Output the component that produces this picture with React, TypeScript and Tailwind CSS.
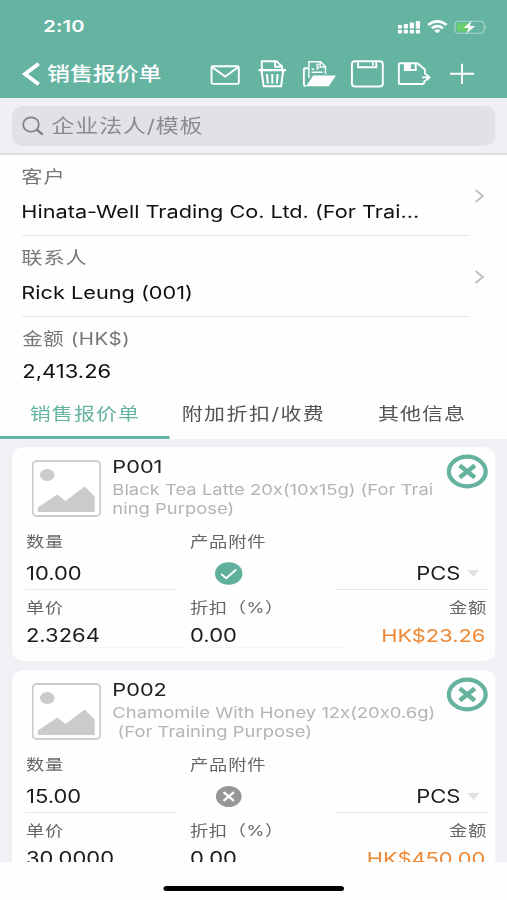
import React from "react";

const items = [
  {
    code: "P001",
    desc: ["Black Tea Latte 20x(10x15g) (For Trai", "ning Purpose)"],
    qty: "10.00",
    attached: true,
    price: "2.3264",
    discount: "0.00",
    amount: "HK$23.26",
  },
  {
    code: "P002",
    desc: ["Chamomile With Honey 12x(20x0.6g)", " (For Training Purpose)"],
    qty: "15.00",
    attached: false,
    price: "30.0000",
    discount: "0.00",
    amount: "HK$450.00",
  },
];

function StatusBar() {
  return (
    <div className="flex h-[50px] items-center justify-between pt-[3px] pl-[35.5px] pr-[16px]">
      <span className="text-[16.5px] font-semibold leading-none tracking-[0.1px]">2:10</span>
      <svg className="h-[16px] w-[74px]" viewBox="0 0 90 16" preserveAspectRatio="none">
        {/* signal */}
        <g fill="#fff">
          <rect x="0" y="6" width="4.2" height="3.6" rx="1" />
          <rect x="6" y="5" width="4.2" height="4.6" rx="1" />
          <rect x="12" y="3.5" width="4.2" height="6.1" rx="1" />
          <rect x="18" y="2" width="4.2" height="7.8" rx="1" />
          <rect x="0" y="10.8" width="4.2" height="3.8" rx="1" />
          <rect x="6" y="10.8" width="4.2" height="3.8" rx="1" />
          <rect x="12" y="10.8" width="4.2" height="3.8" rx="1" />
          <rect x="18" y="10.8" width="4.2" height="3.8" rx="1" />
        </g>
        {/* wifi */}
        <g fill="none" stroke="#fff" strokeWidth="2.6">
          <path d="M30.3 6 Q39.5 -1.2 48.7 6" />
          <path d="M33.9 9.2 Q39.5 5 45.1 9.2" />
        </g>
        <path d="M36.3 11.4 Q39.5 9 42.7 11.4 L39.5 14.2 Z" fill="#fff" />
        {/* battery */}
        <rect x="57" y="2.2" width="29" height="12" rx="3.5" fill="none" stroke="#a9d6cb" strokeWidth="1.1" />
        <rect x="58.8" y="3.9" width="12" height="8.6" rx="2" fill="#66cf6b" />
        <path d="M87.3 6 Q89.3 8.2 87.3 10.4 Z" fill="#a9d6cb" />
        <path d="M73.8 1.6 L65.6 9 L70.8 9 L68.2 14.8 L77.2 7.1 L71.8 7.1 Z" fill="#fff" />
      </svg>
    </div>
  );
}

function Toolbar() {
  return (
    <div className="flex h-[48px] items-center text-[18.8px] font-medium">
      <svg className="ml-[18px] h-[24px] w-[15px]" viewBox="0 0 18 24" preserveAspectRatio="none" fill="none" stroke="#fff" strokeWidth="3.8">
        <path d="M16.5 1.7 L3 12 L16.5 22.3" />
      </svg>
      <span className="ml-[5.5px] w-[100px] whitespace-nowrap pt-[3px] leading-none">销售报价单</span>
      <svg className="ml-[33.5px] h-[30px] w-[217px] shrink-0" viewBox="210 59 264 30" preserveAspectRatio="none" fill="none" stroke="#fff" strokeWidth="1.9">
        {/* mail */}
        <rect x="211.7" y="66.3" width="27.2" height="17.6" rx="1.5" />
        <path d="M212.5 67.2 L225.3 76.5 L238.2 67.2" />
        {/* trash */}
        <path d="M258.5 70.2 H286" strokeWidth="2.2" />
        <path d="M261.5 70.5 L263.7 86.3 H281 L283.2 70.5" strokeWidth="2" />
        <path d="M261.8 70 V61.3 H276.5 L282 66.5 V70 M275 61.5 V66.7 H281.5" />
        <path d="M267 74 L267.8 83.5 M272.3 74 V83.5 M277.5 74 L276.8 83.5" strokeWidth="2" />
        {/* open folder */}
        <path d="M306 85.8 H305 Q303.8 85.8 303.8 84.5 V69.5 Q303.8 68.3 305 68.3 H308" />
        <path d="M308.8 78 V61.8 H320.5 L325.3 66.5 V74 M320 62 V67 H325 M311.5 69.2 H314 M311.5 72.2 H322.5" strokeWidth="1.4" />
        <path d="M318.8 64.6 Q316 63.6 316 65.4 Q316 66.2 317.5 66.5 Q319 66.9 318.7 68 Q318 69.2 315.8 68.3 M317.4 63.3 V69.7" strokeWidth="0.9" />
        <path d="M313 75.5 H335.8 L328.5 86.3 H306 Z" fill="#fff" stroke="none" />
        {/* save */}
        <rect x="351.7" y="61.3" width="30.8" height="25.2" rx="3" />
        <path d="M357.8 61.5 V67.3 H376 V61.5 M372.6 62.5 V65.5" />
        {/* save as */}
        <path d="M424.5 74.5 V69.5 L417 63.2 H400 Q398.5 63.2 398.5 64.5 V82.7 Q398.5 84 400 84 H421.5 Q424.3 84 424.3 80" />
        <path d="M404.5 63.5 V70 H415.3 V63.5" />
        <path d="M404.5 63 H410.5 V70.5 H404.5 Z" fill="#fff" stroke="none" />
        <path d="M421.5 77.4 H428 M425.4 74.3 L429 77.4 L425.4 80.5" />
        {/* plus */}
        <path d="M449.5 73.8 H473.5 M461.5 63.7 V84" />
      </svg>
    </div>
  );
}

function Field({ label, value }: { label: string; value: string }) {
  return (
    <div className="flex h-[81px] items-center pl-[17.5px]">
      <div className="h-full w-[367.5px] border-b border-[#e6e7e7]">
        <div className="flex h-[39px] items-center pt-[6px] text-[17.4px] tracking-[0.7px] text-[#777]">{label}</div>
        <div className="flex h-[35px] items-center whitespace-nowrap pt-[2px] text-[17.8px] text-[#111]">{value}</div>
      </div>
      <svg className="ml-[3.5px] h-[14px] w-[8px]" viewBox="0 0 10 14" preserveAspectRatio="none" fill="none" stroke="#bfbfbf" strokeWidth="2">
        <path d="M1 1 L8.5 7 L1 13" />
      </svg>
    </div>
  );
}

function Card({ item }: { item: (typeof items)[number] }) {
  return (
    <div className="h-[214px] shrink-0 rounded-[10px] bg-[#fefefe] pl-[11.5px]">
      <div className="flex h-[82px]">
        <svg className="mt-[13px] ml-[4.3px] h-[57px] w-[57px] shrink-0" viewBox="0 0 69 57" preserveAspectRatio="none">
          <rect x="1" y="1" width="67" height="55" rx="4" fill="#fff" stroke="#cdcdcd" strokeWidth="1.8" />
          <ellipse cx="15.5" cy="15" rx="7.3" ry="6" fill="#cbcbcb" />
          <path d="M6 52 V47.5 L25.5 34.5 L33.5 41 L52.5 26.5 L62.5 36.5 V52 Z" fill="#cbcbcb" />
        </svg>
        <div className="ml-[9.5px] w-[273.5px] pt-[9px]">
          <div className="h-[22px] text-[17.8px] leading-[22px] text-[#222]">{item.code}</div>
          {item.desc.map((line) => (
            <div key={line} className="h-[18.5px] whitespace-pre pt-[3px] text-[15.1px] leading-[18.5px] text-[#b4b4b4]">
              {line}
            </div>
          ))}
        </div>
        <svg className="mt-[7px] h-[35px] w-[34px] shrink-0" viewBox="0 0 41 35" preserveAspectRatio="none" fill="none" stroke="#65b39f">
          <ellipse cx="20.5" cy="17.5" rx="18.2" ry="14.8" strokeWidth="4.2" />
          <path d="M13 11.5 L28 23.5 M28 11.5 L13 23.5" strokeWidth="4.4" />
        </svg>
      </div>
      <div className="grid grid-cols-[134.5px_119.5px_124px] text-[18px] text-[#1c1c1c]">
        <div className="flex h-[27px] items-center text-[15px] tracking-[0.6px] text-[#666]">数量</div>
        <div className="flex h-[27px] items-center text-[15px] tracking-[0.6px] text-[#666]">产品附件</div>
        <div />

        <div className="mr-[12px] flex h-[34px] items-center border-b border-[#e9e9e9] pt-[2px]">{item.qty}</div>
        <div className="flex h-[34px] items-center pl-[20px]">
          {item.attached ? (
            <svg className="h-[23px] w-[23px]" viewBox="0 0 28 23" preserveAspectRatio="none">
              <ellipse cx="14" cy="11.5" rx="13.7" ry="11.3" fill="#5fb09c" />
              <path d="M6.5 12 L11.5 16.2 L21.5 7.5" fill="none" stroke="#fff" strokeWidth="2" />
            </svg>
          ) : (
            <svg className="h-[23px] w-[23px]" viewBox="0 0 28 23" preserveAspectRatio="none">
              <ellipse cx="14" cy="11.5" rx="12.8" ry="10.5" fill="#979797" />
              <path d="M8.8 7.2 L19.2 15.8 M19.2 7.2 L8.8 15.8" stroke="#fff" strokeWidth="2.4" />
            </svg>
          )}
        </div>
        <div className="flex h-[34px] items-center justify-end border-b border-[#e4e4e4] pt-[2px] pr-[6px]">
          PCS
          <svg className="ml-[6px] h-[7px] w-[10px]" viewBox="0 0 12 7" preserveAspectRatio="none">
            <path d="M0 0 H12 L6 7 Z" fill="#e1e1e1" />
          </svg>
        </div>

        <div className="flex h-[34px] items-center pt-[3px] text-[15px] tracking-[0.6px] text-[#666]">单价</div>
        <div className="flex h-[34px] items-center pt-[3px] text-[15px] tracking-[0.4px] text-[#666]">折扣（%）</div>
        <div className="flex h-[34px] items-center justify-end pt-[3px] text-[15px] tracking-[0.6px] text-[#666]">金额</div>

        <div className="mr-[5px] flex h-[24px] items-center border-b border-[#f5f5f5]">{item.price}</div>
        <div className="-mr-[9px] flex h-[24px] items-center border-b border-[#f5f5f5]">{item.discount}</div>
        <div className="flex h-[24px] items-center justify-end pr-[1.5px] text-[17.9px] text-[#ee8937]">{item.amount}</div>
      </div>
    </div>
  );
}

export default function App() {
  return (
    <div className="h-[900px] w-[507px] overflow-hidden bg-[#fefefe]">
      <div className="flex h-[900px] w-[415.6px] origin-top-left scale-x-[1.22] flex-col font-['Inter','Noto_Sans_CJK_SC',sans-serif] [font-feature-settings:'calt'_0]">
        <div className="h-[98px] shrink-0 bg-[#65b4a2] text-white">
          <StatusBar />
          <Toolbar />
        </div>
        <div className="h-[57px] shrink-0 border-b-2 border-[#e0e0e3] bg-[#f0eff4] px-[9.8px] pt-[8px]">
          <div className="flex h-[40px] items-center rounded-[9px] bg-[#e2e1e6] pl-[8px]">
            <svg className="h-[20px] w-[18px]" viewBox="0 0 23 20" preserveAspectRatio="none" fill="none" stroke="#7f7f84">
              <ellipse cx="9.5" cy="8.5" rx="8.2" ry="7.2" strokeWidth="1.8" />
              <path d="M15.3 13.5 L21.8 18.7" strokeWidth="2.3" />
            </svg>
            <span className="ml-[6.5px] pt-[3px] text-[18.8px] tracking-[0.7px] text-[#8b8b90]">企业法人/模板</span>
          </div>
        </div>
        <div className="h-[238px] shrink-0 overflow-hidden">
          <Field label="客户" value="Hinata-Well Trading Co. Ltd. (For Trai..." />
          <Field label="联系人" value="Rick Leung (001)" />
          <div className="h-[76px] pl-[18.3px]">
            <div className="flex h-[39px] items-center pt-[7px] text-[16.8px] tracking-[0.45px] text-[#777]">金额 (HK$)</div>
            <div className="flex h-[29px] items-center pt-px text-[18px] text-[#111]">2,413.26</div>
          </div>
        </div>
        <div className="flex h-[46px] shrink-0 text-[17.2px] tracking-[0.9px] text-[#555]">
          <div className="flex w-[139.3px] items-center justify-center border-b-3 border-[#65b4a2] pb-[2px] text-[#65b4a2]">销售报价单</div>
          <div className="flex w-[137px] items-center justify-center pb-[5px] tracking-[1.2px]">附加折扣/收费</div>
          <div className="flex w-[139.3px] items-center justify-center pb-[5px]">其他信息</div>
        </div>
        <div className="flex h-[423px] shrink-0 flex-col gap-[9px] overflow-hidden bg-[#f0f1f5] px-[9.8px] pt-[8px]">
          {items.map((item) => (
            <Card key={item.code} item={item} />
          ))}
        </div>
        <div className="flex h-[38px] shrink-0 items-center justify-center pt-[15px]">
          <div className="h-[5px] w-[148px] rounded-full bg-black" />
        </div>
      </div>
    </div>
  );
}
